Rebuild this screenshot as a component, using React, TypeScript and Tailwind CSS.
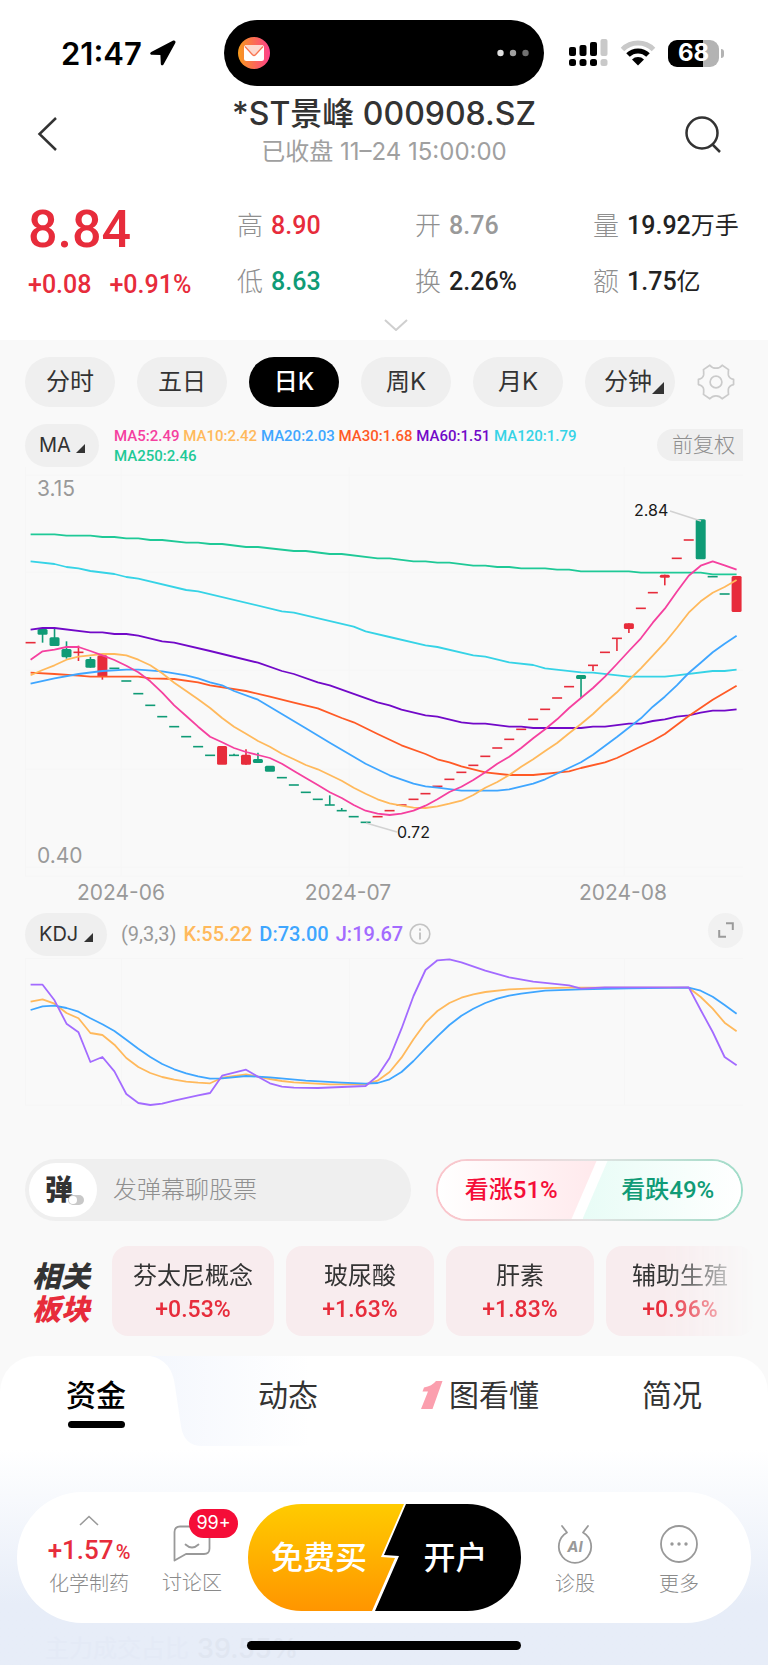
import { useState } from "react";
import clsx from "clsx";

type Point = [index: number, level: number];

type Candle = {
  i: number;
  up?: boolean;
  top: number;
  bottom?: number;
  high?: number;
  low?: number;
};

const CANDLES: Candle[] = [
  { i: 0, up: true, top: 488 },
  { i: 1, top: 447, bottom: 464, low: 488 },
  { i: 2, top: 472, bottom: 498, high: 447 },
  { i: 3, top: 507, bottom: 532, high: 484, low: 536 },
  { i: 4, up: true, top: 517, high: 497, low: 543 },
  { i: 5, top: 537, bottom: 563, high: 531 },
  { i: 6, up: true, top: 526, bottom: 590, low: 599 },
  { i: 7, top: 565 },
  { i: 8, top: 603 },
  { i: 9, top: 641 },
  { i: 10, top: 676 },
  { i: 11, top: 710 },
  { i: 12, top: 740 },
  { i: 13, top: 770 },
  { i: 14, top: 800 },
  { i: 15, top: 826 },
  { i: 16, up: true, top: 798, bottom: 854 },
  { i: 17, top: 826, high: 821 },
  { i: 18, up: true, top: 824, bottom: 854, high: 808 },
  { i: 19, top: 837, bottom: 849, high: 818 },
  { i: 20, top: 857, bottom: 875 },
  { i: 21, top: 893 },
  { i: 22, top: 915 },
  { i: 23, top: 937 },
  { i: 24, top: 958 },
  { i: 25, top: 975, high: 946 },
  { i: 26, top: 992, high: 984 },
  { i: 27, top: 1010 },
  { i: 28, top: 1027 },
  { i: 29, up: true, top: 1010 },
  { i: 30, up: true, top: 992 },
  { i: 31, up: true, top: 975 },
  { i: 32, up: true, top: 958 },
  { i: 33, up: true, top: 941 },
  { i: 34, up: true, top: 919 },
  { i: 35, up: true, top: 898 },
  { i: 36, up: true, top: 877 },
  { i: 37, up: true, top: 856 },
  { i: 38, up: true, top: 829 },
  { i: 39, up: true, top: 804 },
  { i: 40, up: true, top: 778 },
  { i: 41, up: true, top: 748 },
  { i: 42, up: true, top: 718 },
  { i: 43, up: true, top: 688 },
  { i: 44, up: true, top: 654 },
  { i: 45, up: true, top: 620 },
  { i: 46, top: 585, bottom: 597, low: 653 },
  { i: 47, up: true, top: 556, low: 573 },
  { i: 48, up: true, top: 517 },
  { i: 49, up: true, top: 475, low: 513 },
  { i: 50, up: true, top: 430, bottom: 447, low: 459 },
  { i: 51, up: true, top: 385 },
  { i: 52, up: true, top: 338 },
  { i: 53, up: true, top: 284, bottom: 293, low: 316 },
  { i: 54, up: true, top: 235 },
  { i: 55, up: true, top: 180 },
  { i: 56, top: 118, bottom: 238 },
  { i: 57, top: 290 },
  { i: 58, top: 342 },
  { i: 59, up: true, top: 288, bottom: 396 },
];

const AVERAGES: { name: string; value: string; color: string; points: Point[] }[] = [
  {
    name: "MA250",
    value: "2.46",
    color: "#1fc997",
    points: [[0, 163], [2, 163], [3, 167], [5, 167], [6, 171], [7, 171], [8, 175], [9, 175], [10, 180], [11, 180], [13, 188], [14, 188], [15, 192], [16, 192], [18, 201], [19, 201], [22, 213], [23, 213], [25, 222], [26, 222], [29, 235], [30, 235], [32, 244], [33, 244], [34, 248], [35, 248], [37, 257], [38, 257], [39, 261], [40, 261], [41, 265], [43, 265], [44, 269], [45, 269], [46, 274], [50, 274], [51, 278], [56, 278], [57, 283], [59, 283]],
  },
  {
    name: "MA120",
    value: "1.79",
    color: "#36d3e6",
    points: [[0, 244], [2, 252], [3, 261], [4, 265], [5, 273], [7, 282], [8, 291], [9, 296], [13, 330], [14, 334], [21, 394], [22, 398], [27, 440], [28, 454], [30, 471], [33, 496], [34, 501], [37, 526], [38, 530], [40, 547], [42, 555], [43, 565], [46, 577], [47, 578], [50, 590], [53, 590], [54, 586], [57, 573], [58, 573], [59, 569]],
  },
  {
    name: "MA60",
    value: "1.51",
    color: "#7209c8",
    points: [[0, 449], [1, 444], [2, 444], [5, 457], [6, 457], [7, 462], [8, 462], [9, 467], [11, 484], [12, 488], [15, 513], [19, 548], [21, 573], [22, 582], [24, 607], [25, 616], [29, 667], [30, 676], [31, 689], [33, 706], [34, 710], [36, 727], [37, 731], [38, 731], [40, 740], [41, 740], [42, 744], [46, 744], [47, 740], [48, 740], [50, 731], [51, 731], [52, 723], [53, 718], [54, 710], [55, 706], [56, 698], [57, 692], [58, 692], [59, 688]],
  },
  {
    name: "MA30",
    value: "1.68",
    color: "#ff5a26",
    points: [[0, 578], [2, 582], [4, 587], [5, 590], [9, 590], [10, 595], [12, 597], [14, 607], [15, 616], [18, 633], [20, 650], [22, 668], [24, 685], [26, 714], [27, 727], [29, 762], [31, 796], [33, 822], [34, 838], [35, 847], [36, 859], [38, 877], [40, 885], [42, 885], [45, 874], [46, 864], [48, 847], [49, 834], [52, 782], [53, 762], [55, 708], [57, 659], [59, 617]],
  },
  {
    name: "MA20",
    value: "2.03",
    color: "#3fa6ff",
    points: [[0, 611], [2, 595], [4, 582], [6, 573], [8, 569], [9, 569], [11, 574], [13, 586], [14, 595], [15, 607], [16, 616], [17, 633], [19, 659], [21, 702], [23, 745], [25, 788], [27, 830], [28, 851], [30, 886], [32, 911], [33, 919], [34, 923], [36, 932], [39, 932], [40, 928], [42, 911], [43, 898], [46, 847], [47, 824], [49, 771], [51, 715], [52, 680], [53, 650], [54, 616], [55, 579], [56, 548], [57, 517], [58, 491], [59, 467]],
  },
  {
    name: "MA10",
    value: "2.42",
    color: "#ffb95c",
    points: [[0, 586], [1, 570], [2, 556], [3, 539], [4, 530], [5, 526], [6, 522], [7, 522], [8, 526], [9, 539], [10, 556], [11, 580], [12, 608], [13, 633], [14, 658], [15, 684], [16, 714], [17, 740], [18, 761], [19, 783], [20, 800], [21, 821], [22, 838], [23, 855], [24, 868], [25, 885], [26, 902], [27, 923], [28, 941], [29, 958], [30, 970], [31, 977], [32, 983], [33, 984], [34, 979], [35, 971], [36, 962], [37, 945], [38, 923], [39, 906], [40, 885], [41, 860], [42, 838], [43, 813], [44, 789], [45, 760], [46, 732], [47, 702], [48, 668], [49, 637], [50, 600], [51, 565], [52, 527], [53, 488], [54, 444], [55, 398], [56, 364], [57, 338], [58, 321], [59, 300]],
  },
  {
    name: "MA5",
    value: "2.49",
    color: "#f5409f",
    points: [[0, 539], [1, 514], [2, 509], [3, 501], [4, 501], [5, 513], [6, 526], [7, 540], [8, 557], [9, 577], [10, 604], [11, 638], [12, 676], [13, 708], [14, 740], [15, 770], [16, 787], [17, 804], [18, 816], [19, 825], [20, 834], [21, 851], [22, 873], [23, 894], [24, 915], [25, 937], [26, 954], [27, 975], [28, 992], [29, 1001], [30, 1005], [31, 1001], [32, 992], [33, 977], [34, 958], [35, 936], [36, 920], [37, 900], [38, 877], [39, 851], [40, 830], [41, 804], [42, 775], [43, 748], [44, 718], [45, 684], [46, 654], [47, 624], [48, 590], [49, 552], [50, 513], [51, 475], [52, 428], [53, 386], [54, 335], [55, 287], [56, 257], [57, 244], [58, 256], [59, 269]],
  },
];

const KDJ: { name: string; value: string; color: string; points: Point[] }[] = [
  {
    name: "K",
    value: "55.22",
    color: "#ffb95c",
    points: [[0, 365], [1, 358], [2, 371], [3, 399], [4, 415], [5, 459], [6, 465], [7, 494], [8, 534], [9, 561], [10, 579], [11, 591], [12, 599], [13, 605], [14, 608], [15, 610], [16, 593], [18, 583], [20, 597], [21, 603], [22, 607], [25, 613], [28, 613], [29, 602], [30, 576], [31, 533], [32, 478], [33, 428], [34, 393], [35, 369], [36, 353], [37, 343], [38, 336], [40, 328], [42, 325], [45, 323], [55, 323], [56, 351], [57, 386], [58, 428], [59, 454]],
  },
  {
    name: "D",
    value: "73.00",
    color: "#3fa6ff",
    points: [[0, 390], [1, 379], [2, 377], [3, 384], [4, 395], [5, 415], [6, 433], [7, 453], [8, 479], [9, 506], [10, 531], [11, 552], [12, 568], [13, 580], [14, 589], [15, 596], [16, 595], [18, 588], [20, 592], [23, 602], [26, 608], [28, 611], [29, 609], [30, 598], [31, 576], [32, 543], [33, 505], [34, 469], [35, 435], [36, 407], [37, 386], [38, 369], [39, 356], [40, 347], [41, 341], [43, 332], [46, 328], [50, 325], [55, 323], [56, 332], [57, 350], [58, 375], [59, 401]],
  },
  {
    name: "J",
    value: "19.67",
    color: "#a36bff",
    points: [[0, 314], [1, 314], [2, 361], [3, 431], [4, 457], [5, 546], [6, 531], [7, 574], [8, 642], [9, 669], [10, 675], [11, 671], [12, 662], [14, 646], [15, 639], [16, 587], [18, 569], [19, 590], [20, 610], [21, 620], [22, 623], [24, 624], [28, 618], [29, 588], [30, 534], [31, 446], [32, 348], [33, 270], [34, 241], [35, 238], [36, 247], [38, 272], [40, 292], [42, 305], [45, 316], [46, 326], [48, 322], [55, 322], [56, 390], [57, 456], [58, 531], [59, 556]],
  },
];

const PERIODS = ["分时", "五日", "日K", "周K", "月K", "分钟"];

const MA_LEGEND = ["MA5", "MA10", "MA20", "MA30", "MA60", "MA120", "MA250"];

const SECTORS = [
  { name: "芬太尼概念", change: "+0.53%" },
  { name: "玻尿酸", change: "+1.63%" },
  { name: "肝素", change: "+1.83%" },
  { name: "辅助生殖", change: "+0.96%" },
];

const UP = "#e72c3b";
const DOWN = "#0f9b76";

const px = (i: number) => 5.6 + i * 11.966;

const toPoints = (points: Point[], offset: number) =>
  points.map(([i, level]) => `${px(i).toFixed(1)},${(level / 3 + offset).toFixed(1)}`).join(" ");

function PriceChart() {
  const y = (level: number) => level / 3 + 13;

  return (
    <svg viewBox="0 0 718 440" className="block h-auto w-full" role="img" aria-label="日K线图">
      <g stroke="#f6f6f6" strokeWidth="1">
        {[8, 105, 203, 302, 400, 409].map((gy) => (
          <line key={gy} x1="0" x2="718" y1={gy} y2={gy} />
        ))}
        {[0.5, 96, 324, 599].map((gx) => (
          <line key={gx} x1={gx} x2={gx} y1="0" y2="409" />
        ))}
      </g>
      {CANDLES.map((c) => {
        const color = c.up ? UP : DOWN;
        const bottom = c.bottom ?? c.top;
        return (
          <g key={c.i} fill={color} stroke={color}>
            {(c.high || c.low) && (
              <line
                x1={px(c.i)}
                x2={px(c.i)}
                y1={y(c.high ?? c.top)}
                y2={y(c.low ?? bottom)}
                strokeWidth="1.6"
              />
            )}
            {c.bottom ? (
              <rect
                x={px(c.i) - 5}
                y={y(c.top)}
                width="10"
                height={(c.bottom - c.top) / 3}
                rx="1.5"
                stroke="none"
              />
            ) : (
              <line x1={px(c.i) - 5} x2={px(c.i) + 5} y1={y(c.top)} y2={y(c.top)} strokeWidth="1.6" />
            )}
          </g>
        );
      })}
      {AVERAGES.map((line) => (
        <polyline
          key={line.name}
          points={toPoints(line.points, 13)}
          fill="none"
          stroke={line.color}
          strokeWidth="1.8"
          strokeLinejoin="round"
        />
      ))}
      <g stroke="#d2d2d2" strokeWidth="1.5">
        <line x1="645" y1="44" x2="676" y2="54" />
        <line x1="341" y1="356" x2="372" y2="365" />
      </g>
      <g fill="#1a1a1a" fontSize="16">
        <text x="609" y="49">2.84</text>
        <text x="372" y="371">0.72</text>
      </g>
      <g fill="#999999" fontSize="21">
        <text x="12" y="29">3.15</text>
        <text x="12" y="396">0.40</text>
        <text x="96" y="433" textAnchor="middle">2024-06</text>
        <text x="323" y="433" textAnchor="middle">2024-07</text>
        <text x="598" y="433" textAnchor="middle">2024-08</text>
      </g>
    </svg>
  );
}

function KdjChart() {
  return (
    <svg viewBox="0 0 718 150" className="block h-auto w-full" role="img" aria-label="KDJ">
      <g stroke="#f6f6f6" strokeWidth="1">
        <path d="M0 1.5H718M0 148H718M.5 1V148M96.5 1V148M324.5 1V148M599.5 1V148" />
      </g>
      {KDJ.map((line) => (
        <polyline
          key={line.name}
          points={toPoints(line.points, -77)}
          fill="none"
          stroke={line.color}
          strokeWidth="1.8"
          strokeLinejoin="round"
        />
      ))}
    </svg>
  );
}

function Corner({ size }: { size: number }) {
  return (
    <svg width={size} height={size} viewBox="0 0 10 10" fill="#333333" aria-hidden="true">
      <path d="M10 0V10H0Z" />
    </svg>
  );
}

function StatusBar() {
  return (
    <div className="flex h-[94px] items-start pt-5">
      <div className="flex h-[66px] w-[224px] items-center gap-2 pl-[61px]">
        <span className="text-[31px] leading-none font-semibold text-black">21:47</span>
        <svg width="26" height="26" viewBox="0 0 26 26" aria-hidden="true">
          <path
            d="M23.2.6 1.2 12c-1.6.9-1.2 2.6.6 2.7l8.6.3.4 8.8c.1 1.8 1.9 2.1 2.7.6L25.3 3C26 1.3 24.8-.2 23.2.6Z"
            fill="#000"
          />
        </svg>
      </div>
      <div className="flex h-[66px] w-[320px] items-center justify-between rounded-full bg-black pr-[15px] pl-[14px]">
        <svg width="32" height="32" viewBox="0 0 32 32" aria-hidden="true">
          <defs>
            <linearGradient id="mail" x1="0" x2="1">
              <stop offset="0" stopColor="#f79a1c" />
              <stop offset="1" stopColor="#ff3f8b" />
            </linearGradient>
          </defs>
          <circle cx="16" cy="16" r="16" fill="url(#mail)" />
          <rect x="6" y="8" width="20" height="16" rx="2.5" fill="#fff" />
          <path d="M7 8H25L17.5 17.5Q16 19 14.5 17.5Z" fill="#fdd9cf" />
          <path d="M7 9.5 14.5 17.8Q16 19.2 17.5 17.8L25 9.5" fill="none" stroke="#f9744f" strokeWidth="1.3" />
        </svg>
        <svg width="32" height="8" viewBox="0 0 32 8" aria-hidden="true">
          <circle cx="3.5" cy="4" r="3.2" fill="#e0e0e0" />
          <circle cx="16" cy="4" r="3.2" fill="#a0a0a0" />
          <circle cx="28.5" cy="4" r="3.2" fill="#707070" />
        </svg>
      </div>
      <div className="flex h-[66px] items-center gap-3 pl-6">
        <svg width="40" height="28" viewBox="0 0 40 28" aria-hidden="true">
          <g fill="#000">
            <rect x="1" y="8" width="7" height="9" rx="2" />
            <rect x="11.5" y="6" width="7" height="11" rx="2" />
            <rect x="22" y="3" width="7" height="14" rx="2" />
            <rect x="1" y="20" width="7" height="7" rx="2.5" />
            <rect x="11.5" y="20" width="7" height="7" rx="2.5" />
            <rect x="22" y="20" width="7" height="7" rx="2.5" />
          </g>
          <g fill="#c9c9c9">
            <rect x="32.5" y="0" width="7" height="17" rx="2" />
            <rect x="32.5" y="20" width="7" height="7" rx="2.5" />
          </g>
        </svg>
        <svg width="36" height="26" viewBox="0 0 36 26" aria-hidden="true">
          <g fill="none">
            <path d="M2.5 9.5A22 22 0 0 1 33.5 9.5" stroke="#c9c9c9" strokeWidth="5" />
            <path d="M8 15A14.2 14.2 0 0 1 28 15" stroke="#000" strokeWidth="5" />
          </g>
          <path d="M12 19.5A8.6 8.6 0 0 1 24 19.5L18 25.5Z" fill="#000" />
        </svg>
        <div className="flex items-center gap-[2px]">
          <span className="flex h-[27px] w-[51px] items-center justify-center rounded-[9px] bg-linear-to-r from-black from-68% to-[#b3b3b3] to-68% text-[24px] leading-none font-bold text-white">
            68
          </span>
          <span className="h-[9px] w-[3px] rounded-r-full bg-[#b3b3b3]" />
        </div>
      </div>
    </div>
  );
}

type QuoteProps = { label: string; value: string; unit?: string; tone: string };

function Quote({ label, value, unit, tone }: QuoteProps) {
  return (
    <div className="flex h-14 items-center gap-2">
      <span className="text-[26px] leading-8 font-light text-[#8f8f8f]">{label}</span>
      <span className={clsx("text-[25px] leading-8 font-medium whitespace-nowrap", tone)}>
        {value}
        {unit && <span className="text-2xl font-normal">{unit}</span>}
      </span>
    </div>
  );
}

export default function App() {
  const [period, setPeriod] = useState("日K");
  const [message, setMessage] = useState("");

  return (
    <div className="min-h-screen bg-[#f9f9f9] font-[family-name:Inter,'Noto_Sans_CJK_SC',sans-serif] text-[#333333]">
      <header className="bg-white">
        <StatusBar />
        <div className="flex h-20 items-center justify-between px-8">
          <button aria-label="返回" className="flex h-12 w-[52px] items-center">
            <svg width="32" height="36" viewBox="0 0 32 36" fill="none" stroke="#333" strokeWidth="2.5" aria-hidden="true">
              <path d="M24 2 7.5 18 24 34" />
            </svg>
          </button>
          <div className="text-center">
            <h1 className="text-[32px] leading-9 font-medium">*ST景峰 000908.SZ</h1>
            <p className="text-2xl leading-10 text-[#a0a0a0]">已收盘 11–24 15:00:00</p>
          </div>
          <button aria-label="搜索" className="flex h-12 w-[52px] items-center">
            <svg width="38" height="38" viewBox="0 0 38 38" fill="none" stroke="#333" strokeWidth="2.5" aria-hidden="true">
              <circle cx="18" cy="18" r="15.5" />
              <path d="M28.5 29.5 36 37" />
            </svg>
          </button>
        </div>

        <div className="grid grid-cols-[209fr_178fr_178fr_150fr] pt-6 pr-[25px] pl-7 font-[family-name:Roboto,'Noto_Sans_CJK_SC',sans-serif]">
          <div>
            <p className="text-[52px] leading-[64px] font-medium text-[#e72c3b]">8.84</p>
            <p className="flex gap-[18px] text-[25px] leading-[46px] font-medium text-[#e72c3b]">
              <span>+0.08</span>
              <span>+0.91%</span>
            </p>
          </div>
          <div>
            <Quote label="高" value="8.90" tone="text-[#e72c3b]" />
            <Quote label="低" value="8.63" tone="text-[#0f9b76]" />
          </div>
          <div>
            <Quote label="开" value="8.76" tone="text-[#999999]" />
            <Quote label="换" value="2.26%" tone="text-[#222222]" />
          </div>
          <div>
            <Quote label="量" value="19.92" unit="万手" tone="text-[#222222]" />
            <Quote label="额" value="1.75" unit="亿" tone="text-[#222222]" />
          </div>
        </div>
        <button aria-label="展开" className="flex h-[30px] w-full items-center justify-center pl-6">
          <svg width="24" height="12" viewBox="0 0 24 12" fill="none" stroke="#cfcfcf" strokeWidth="2" aria-hidden="true">
            <path d="M1 1 12 11 23 1" />
          </svg>
        </button>
      </header>

      <main>
        <section className="px-[25px] pt-[17px]">
          <div className="flex items-center justify-between pr-2">
            {PERIODS.map((name) => (
              <button
                key={name}
                onClick={() => setPeriod(name)}
                className={clsx(
                  "flex h-[50px] w-[90px] items-center justify-center rounded-full text-[24px] leading-8",
                  period === name ? "bg-black font-medium text-white" : "bg-[#efefef]"
                )}
              >
                {name}
                {name === "分钟" && (
                  <span className="-mr-2 self-end pb-[13px]">
                    <Corner size={12} />
                  </span>
                )}
              </button>
            ))}
            <button aria-label="设置">
              <svg width="38" height="38" viewBox="0 0 40 40" fill="none" stroke="#cbcbcb" strokeWidth="1.8" strokeLinejoin="round" aria-hidden="true">
                <path d="M1.5 17.3Q6.5 16.2 7 12.5Q7.2 9.5 6.8 7L13.5 2.3Q16 5.5 20 5.5Q24 5.5 26.5 2.3L33.2 7Q32.8 9.5 33 12.5Q33.5 16.2 38.5 17.3V22.7Q33.5 23.8 33 27.5Q32.8 30.5 33.2 33L26.5 37.7Q24 34.5 20 34.5Q16 34.5 13.5 37.7L6.8 33Q7.2 30.5 7 27.5Q6.5 23.8 1.5 22.7Z" />
                <circle cx="20" cy="20" r="6.2" />
              </svg>
            </button>
          </div>

          <div className="mt-4 flex h-11 items-center">
            <label className="relative flex h-[43px] w-[74px] items-center rounded-full bg-[#efefef]">
              <select aria-label="主图指标" className="w-full appearance-none bg-transparent pl-[14px] text-[20px] leading-8 outline-none">
                <option>MA</option>
                <option>BOLL</option>
              </select>
              <span className="pointer-events-none absolute right-[14px] bottom-[14px] flex">
                <Corner size={9} />
              </span>
            </label>
            <p className="ml-[15px] w-[500px] pt-px font-[family-name:Roboto,sans-serif] text-[15px] leading-5 font-medium">
              {MA_LEGEND.map((name) => {
                const line = AVERAGES.find((a) => a.name === name)!;
                return (
                  <span key={name} style={{ color: line.color }}>
                    {name}:{line.value}{" "}
                  </span>
                );
              })}
            </p>
            <button className="ml-auto h-8 rounded-l-full bg-[#efefef] pr-2 pl-[15px] text-[21px] leading-8 font-light whitespace-nowrap text-[#8f8f8f]">
              前复权
            </button>
          </div>

          <PriceChart />

          <div className="mt-1 flex h-[46px] items-center">
            <label className="relative flex h-[43px] w-[82px] items-center rounded-full bg-[#efefef]">
              <select aria-label="副图指标" className="w-full appearance-none bg-transparent pl-[14px] text-[20px] leading-8 outline-none">
                <option>KDJ</option>
                <option>MACD</option>
              </select>
              <span className="pointer-events-none absolute right-[14px] bottom-[14px] flex">
                <Corner size={9} />
              </span>
            </label>
            <p className="ml-[14px] flex gap-[7px] font-[family-name:Roboto,sans-serif] text-[20px] leading-8 font-medium whitespace-nowrap">
              <span className="font-normal text-[#999999]">(9,3,3)</span>
              {KDJ.map((line) => (
                <span key={line.name} style={{ color: line.color }}>
                  {line.name}:{line.value}
                </span>
              ))}
            </p>
            <button aria-label="指标说明" className="ml-[6px]">
              <svg width="22" height="22" viewBox="0 0 22 22" fill="none" stroke="#c4c4c4" strokeWidth="1.6" aria-hidden="true">
                <circle cx="11" cy="11" r="9.8" />
                <path d="M11 9.5V16.5M11 5.5V7.7" strokeWidth="2" />
              </svg>
            </button>
            <button aria-label="全屏" className="mb-2 ml-auto flex h-[35px] w-[35px] items-center justify-center rounded-full bg-[#f1f1f1]">
              <svg width="16" height="16" viewBox="0 0 16 16" fill="none" stroke="#9a9a9a" strokeWidth="2" aria-hidden="true">
                <path d="M8 1.2H14.8V8M1.2 8V14.8H8" />
              </svg>
            </button>
          </div>

          <KdjChart />
        </section>

        <section className="mt-[52px] grid grid-cols-[386fr_307fr] gap-[25px] px-[25px]">
          <div className="flex h-[62px] min-w-0 items-center rounded-full bg-[#efefef] p-1">
            <button aria-label="弹幕开关" className="relative flex h-[54px] w-[68px] shrink-0 items-center justify-center rounded-full bg-white">
              <span className="pr-2 text-[28px] leading-8 font-black">弹</span>
              <span className="absolute right-[13px] bottom-3 flex h-[10px] w-4 rounded-full bg-[#c8c8c8] p-px">
                <span className="h-2 w-2 rounded-full bg-white" />
              </span>
            </button>
            <input
              value={message}
              onChange={(e) => setMessage(e.target.value)}
              placeholder="发弹幕聊股票"
              aria-label="发弹幕聊股票"
              className="ml-4 w-0 min-w-0 flex-1 bg-transparent text-2xl leading-8 font-light outline-none placeholder:text-[#8f8f8f]"
            />
          </div>
          <div className="h-[62px] min-w-0 rounded-full bg-linear-to-r from-[#fbc3ca] via-[#e2e2e2] to-[#9fdcc8] p-[2px]">
            <div className="flex h-full overflow-hidden rounded-full bg-white font-[family-name:Roboto,'Noto_Sans_CJK_SC',sans-serif] text-[24px] font-medium">
              <button className="flex-1 bg-linear-to-r from-white to-[#ffe9ec] pr-3 text-[#f50d38] [clip-path:polygon(0_0,100%_0,calc(100%-25px)_100%,0_100%)]">
                看涨51%
              </button>
              <button className="-ml-[14px] flex-1 bg-linear-to-r from-[#e8fcf6] to-white pl-3 text-[#0f9b76] [clip-path:polygon(25px_0,100%_0,100%_100%,0_100%)]">
                看跌49%
              </button>
            </div>
          </div>
        </section>

        <section className="mt-[25px] flex items-center overflow-hidden pl-8">
          <h2 className="w-20 shrink-0 pt-1 text-[29px] leading-[33px] font-black italic">
            相关
            <br />
            <span className="text-[#e72c3b]">板块</span>
          </h2>
          <ul className="flex flex-1 gap-3 [mask-image:linear-gradient(to_right,#000_84%,transparent_98%)]">
            {SECTORS.map((sector) => (
              <li key={sector.name} className="shrink-0">
                <a
                  href="#sector"
                  className="flex h-[90px] min-w-[148px] flex-col items-center justify-center rounded-2xl bg-[#f8ecee] px-[21px] pt-1"
                >
                  <span className="text-2xl leading-[34px]">{sector.name}</span>
                  <span className="font-[family-name:Roboto,sans-serif] text-[23px] leading-[34px] font-medium text-[#e72c3b]">
                    {sector.change}
                  </span>
                </a>
              </li>
            ))}
          </ul>
        </section>

        <section className="relative mt-[20px] rounded-t-[36px] bg-linear-to-b from-white from-30% to-[#e7edf8] to-80% pb-px">
          <svg className="absolute top-0 left-[150px]" width="160" height="92" viewBox="0 0 160 92" aria-hidden="true">
            <defs>
              <linearGradient id="tabTint" x1="0" x2="1">
                <stop offset="0" stopColor="#f4f7fd" />
                <stop offset="1" stopColor="#ffffff" />
              </linearGradient>
            </defs>
            <path d="M0 0H160V90H52Q34 90 31 70L25 30Q22 4 0 0Z" fill="url(#tabTint)" />
          </svg>
          <nav className="relative flex pt-[19px] text-[30px] leading-10">
            <a href="#funds" className="flex flex-1 flex-col items-center gap-[6px] font-medium text-black">
              资金
              <span className="h-[7px] w-[57px] rounded-full bg-black" />
            </a>
            <a href="#news" className="flex-1 text-center">
              动态
            </a>
            <a href="#chart" className="flex flex-1 items-center justify-center gap-[6px] self-start whitespace-nowrap">
              <svg width="22" height="28" viewBox="0 0 22 28" fill="#fb9fae" aria-hidden="true">
                <path d="M21.5 0 11.5 28H0L7 10.5H1.5L3 6.5Q11 5 15 0Z" />
              </svg>
              图看懂
            </a>
            <a href="#brief" className="flex-1 text-center">
              简况
            </a>
          </nav>

          <div className="mx-[17px] mt-16 flex h-[131px] items-center rounded-full bg-white pr-[22px]">
            <a href="#pharma" className="flex w-[144px] flex-col items-center">
              <svg width="20" height="11" viewBox="0 0 20 11" fill="none" stroke="#999" strokeWidth="1.6" aria-hidden="true">
                <path d="M1 10 10 1.5 19 10" />
              </svg>
              <span className="mt-2 font-[family-name:Roboto,sans-serif] text-[26px] leading-8 font-medium text-[#e72c3b]">
                +1.57<span className="ml-[2px] text-[20px]">%</span>
              </span>
              <span className="text-[20px] leading-8 font-light text-[#8a8a8a]">化学制药</span>
            </a>
            <a href="#forum" className="relative flex w-[62px] flex-col items-center pt-2">
              <svg width="38" height="38" viewBox="0 0 38 38" fill="none" stroke="#999" strokeWidth="1.8" strokeLinejoin="round" strokeLinecap="round" aria-hidden="true">
                <path d="M7 1.5H31Q36.5 1.5 36.5 7V23.5Q36.5 29 31 29H13L1.5 35.5V7Q1.5 1.5 7 1.5Z" />
                <path d="M12.5 19.5Q19 25.5 25.5 19.5" />
              </svg>
              <span className="mt-1 text-[20px] leading-8 font-light whitespace-nowrap text-[#8a8a8a]">讨论区</span>
              <span className="absolute -top-2 left-7 flex h-[29px] w-[49px] items-center justify-center rounded-full bg-[#f50d38] text-[18px] leading-none text-white">
                99+
              </span>
            </a>
            <div className="ml-[25px] flex h-[107px] flex-1 overflow-hidden rounded-full bg-white text-[32px] font-medium text-white">
              <button className="w-[158px] shrink-0 bg-linear-to-b from-[#ffcb00] to-[#ff9500] pr-4 whitespace-nowrap [clip-path:polygon(0_0,156px_0,133px_53px,147px_54px,124px_100%,0_100%)]">
                免费买
              </button>
              <button className="-ml-[32px] flex-1 bg-black pl-4 [clip-path:polygon(32px_0,100%_0,100%_100%,1px_100%,25px_52px,10px_51px)]">
                开户
              </button>
            </div>
            <a href="#diagnose" className="flex w-[108px] flex-col items-center pt-2">
              <svg width="38" height="40" viewBox="0 0 38 40" fill="none" stroke="#999" strokeWidth="1.8" strokeLinecap="round" strokeLinejoin="round" aria-hidden="true">
                <path d="M6 2 11 8.5A16.2 16.2 0 1 0 27 8.5L32 2" />
                <text x="19" y="28" textAnchor="middle" fontSize="15" fontWeight="700" fontStyle="italic" fill="#999" stroke="none">
                  AI
                </text>
              </svg>
              <span className="mt-1 text-[20px] leading-8 font-light text-[#8a8a8a]">诊股</span>
            </a>
            <a href="#more" className="flex w-[100px] flex-col items-center pt-2">
              <svg width="38" height="40" viewBox="0 0 38 40" aria-hidden="true">
                <circle cx="19" cy="20" r="18" fill="none" stroke="#999" strokeWidth="1.8" />
                <g fill="#999">
                  <circle cx="12" cy="20" r="1.7" />
                  <circle cx="19" cy="20" r="1.7" />
                  <circle cx="26" cy="20" r="1.7" />
                </g>
              </svg>
              <span className="mt-1 text-[20px] leading-8 font-light text-[#8a8a8a]">更多</span>
            </a>
          </div>

          <div className="relative flex h-[43px] items-center gap-2 overflow-hidden pt-2 pl-[45px] text-2xl text-[#e4eaf6]">
            <span>主力成交占比</span>
            <span className="text-[27px] font-medium text-[#e0e6f1]">39.55%</span>
            <span className="absolute top-[18px] left-1/2 h-[9px] w-[274px] -translate-x-1/2 rounded-full bg-black" />
          </div>
        </section>
      </main>
    </div>
  );
}
